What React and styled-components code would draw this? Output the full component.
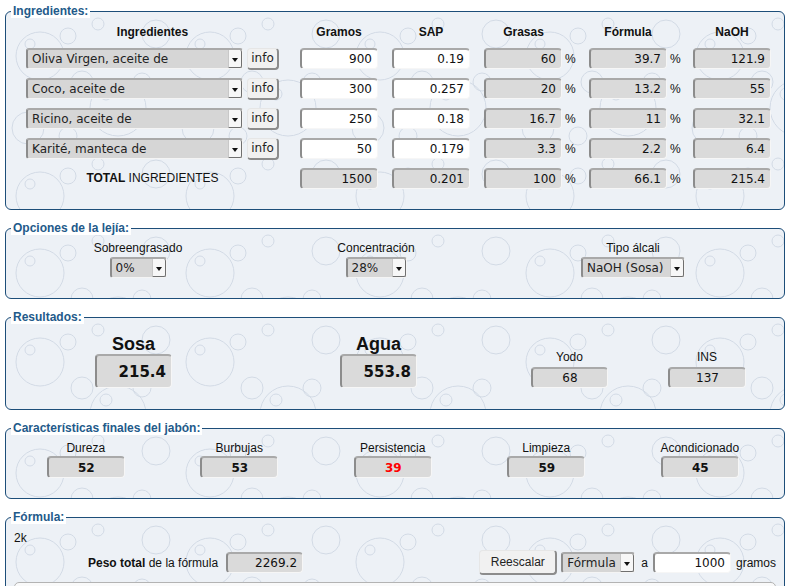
import React from 'react';
import styled, { createGlobalStyle } from 'styled-components';

const bubbleSvg = `<svg xmlns='http://www.w3.org/2000/svg' width='170' height='140'><g fill='none' stroke='#d2dae5' stroke-width='1'><circle cx='34' cy='44' r='24'/><circle cx='24' cy='32' r='5'/><circle cx='62' cy='24' r='8'/><circle cx='112' cy='96' r='28'/><circle cx='100' cy='82' r='6'/><circle cx='136' cy='70' r='9'/><circle cx='150' cy='22' r='14'/><circle cx='22' cy='116' r='16'/><circle cx='62' cy='124' r='9'/><circle cx='92' cy='12' r='6'/><circle cx='76' cy='70' r='11'/></g></svg>`;
const bubbles = `url("data:image/svg+xml,${encodeURIComponent(bubbleSvg)}")`;

const GlobalStyle = createGlobalStyle`
  body {
    margin: 0;
    background: #fff;
    color: #111;
    font-family: "Liberation Sans", Arial, sans-serif;
    font-size: 12px;
  }
`;

const Page = styled.div`
  padding: 4px 6px 0 5px;
`;

const Box = styled.fieldset`
  margin: 0 0 11px;
  padding: 0;
  min-width: 0;
  border: 1px solid #1d4e79;
  border-radius: 6px;
  background: #edf1f6 ${bubbles};
`;

const Legend = styled.legend`
  margin-left: 5px;
  padding: 0 2px;
  background: #fff;
  color: #235a8a;
  font: bold 12px/14px "Liberation Sans", Arial, sans-serif;
`;

const Field = styled.input`
  box-sizing: border-box;
  width: ${(p) => p.$w || 78}px;
  height: ${(p) => p.$h || 21}px;
  margin: 0;
  padding: 0 ${(p) => (p.$center ? 0 : 5)}px 0 0;
  border-style: solid;
  border-width: 2px 1px 1px 2px;
  border-color: #a9a9a9 #f6f6f6 #f6f6f6 #8c8c8c;
  border-radius: 4px;
  background: ${(p) => (p.readOnly ? '#dadada' : '#fff')};
  color: ${(p) => p.$color || '#111'};
  text-align: ${(p) => (p.$center ? 'center' : 'right')};
  font-family: "DejaVu Sans", sans-serif;
  font-size: ${(p) => p.$size || 12}px;
  font-weight: ${(p) => (p.$bold ? 'bold' : 'normal')};
  outline: none;
`;

const SelectBox = styled.div`
  box-sizing: border-box;
  display: flex;
  width: ${(p) => p.$w}px;
  height: 21px;
  border-style: solid;
  border-width: 2px 1px 1px 2px;
  border-color: #a9a9a9 #f4f4f4 #f4f4f4 #8c8c8c;
  border-radius: 3px;
  background: #d6d6d6;
  font: 12px/18px "DejaVu Sans", sans-serif;
  color: #222;
`;

const SelectText = styled.span`
  flex: 1;
  padding-left: 4px;
  white-space: nowrap;
  overflow: hidden;
`;

const Arrow = styled.span`
  box-sizing: border-box;
  width: 14px;
  display: flex;
  align-items: center;
  justify-content: center;
  background: #f7f7f7;
  border-left: 1px solid #c8c8c8;
  border-right: 1px solid #6f6f6f;
  border-bottom: 1px solid #6f6f6f;
  border-radius: 0 2px 2px 0;

  &::after {
    content: '';
    border-left: 3px solid transparent;
    border-right: 3px solid transparent;
    border-top: 4px solid #111;
    margin-top: 2px;
  }
`;

const Button = styled.button`
  box-sizing: border-box;
  width: ${(p) => p.$w}px;
  height: ${(p) => p.$h}px;
  margin: 0;
  padding: 0;
  border-style: solid;
  border-width: 1px 2px 2px 1px;
  border-color: #e6e6e6 #8c8c8c #8c8c8c #e6e6e6;
  border-radius: 4px;
  background: #f1f1f1;
  color: #222;
  font-family: ${(p) => (p.$dejavu ? '"DejaVu Sans", sans-serif' : '"Liberation Sans", Arial, sans-serif')};
  font-size: 12px;
`;

function Select({ w, children }) {
  return (
    <SelectBox $w={w}>
      <SelectText>{children}</SelectText>
      <Arrow />
    </SelectBox>
  );
}

/* ---------- Ingredientes ---------- */

const IngGrid = styled.div`
  display: grid;
  grid-template-columns: 260px 78px 78px 91px 90px 78px;
  grid-template-rows: 13px;
  grid-auto-rows: 21px;
  column-gap: 14px;
  row-gap: 9px;
  align-items: center;
  padding: 8px 0 20px 20px;
`;

const Head = styled.div`
  font-weight: bold;
  line-height: 13px;
  text-align: center;
  padding-right: ${(p) => p.$pr || 0}px;
`;

const IngCell = styled.div`
  display: flex;
  align-items: center;
  gap: 4px;
`;

const PctCell = styled.div`
  display: flex;
  align-items: center;
  gap: 3px;
`;

const TotalLabel = styled.div`
  text-align: center;
  padding-right: 7px;
  line-height: 21px;
`;

const ingredientes = [
  { name: 'Oliva Virgen, aceite de', g: '900', sap: '0.19', grasas: '60', form: '39.7', naoh: '121.9' },
  { name: 'Coco, aceite de', g: '300', sap: '0.257', grasas: '20', form: '13.2', naoh: '55' },
  { name: 'Ricino, aceite de', g: '250', sap: '0.18', grasas: '16.7', form: '11', naoh: '32.1' },
  { name: 'Karité, manteca de', g: '50', sap: '0.179', grasas: '3.3', form: '2.2', naoh: '6.4' },
];

function Pct({ value }) {
  return (
    <PctCell>
      <Field readOnly value={value} />
      <span>%</span>
    </PctCell>
  );
}

/* ---------- Opciones / Resultados / Características ---------- */

const LejiaGrid = styled.div`
  display: grid;
  grid-template-columns: 264px 212px 1fr;
  padding: 6px 0 20px;
`;

const Col = styled.div`
  display: flex;
  flex-direction: column;
  align-items: center;
  gap: ${(p) => p.$gap || 0}px;
`;

const Label = styled.div`
  line-height: 15px;
`;

const BigLabel = styled.div`
  font-weight: bold;
  font-size: 18px;
  line-height: 20px;
`;

const ResGrid = styled.div`
  display: grid;
  grid-template-columns: 255px 235px 147px 128px;
  align-items: end;
  padding: 10px 0 21px;
`;

const CharGrid = styled.div`
  display: grid;
  grid-template-columns: repeat(5, 153.5px);
  padding: 6px 0 20px 3px;
`;

/* ---------- Fórmula ---------- */

const FormBody = styled.div`
  padding: 7px 8px 0;
`;

const Line = styled.div`
  line-height: 15px;
`;

const FormRow = styled.div`
  display: flex;
  align-items: center;
  margin-top: 4px;
  height: 25px;
`;

const Group = styled.div`
  display: flex;
  align-items: center;
  gap: ${(p) => p.$gap}px;
  margin-left: ${(p) => p.$ml};
`;

const Notes = styled.div`
  margin-top: 7px;
  height: 40px;
  border: 1px solid #b3b3b3;
  border-radius: 5px;
  background: #fafafa;
`;

export default function App() {
  return (
    <Page>
      <GlobalStyle />

      <Box>
        <Legend>Ingredientes:</Legend>
        <IngGrid>
          <Head $pr={7}>Ingredientes</Head>
          <Head>Gramos</Head>
          <Head>SAP</Head>
          <Head $pr={12}>Grasas</Head>
          <Head $pr={12}>Fórmula</Head>
          <Head>NaOH</Head>

          {ingredientes.map((r) => (
            <React.Fragment key={r.name}>
              <IngCell>
                <Select w={217}>{r.name}</Select>
                <Button $w={32} $h={22} $dejavu>info</Button>
              </IngCell>
              <Field value={r.g} readOnly={false} onChange={() => {}} />
              <Field value={r.sap} readOnly={false} onChange={() => {}} />
              <Pct value={r.grasas} />
              <Pct value={r.form} />
              <Field readOnly value={r.naoh} />
            </React.Fragment>
          ))}

          <TotalLabel>
            <b>TOTAL</b> INGREDIENTES
          </TotalLabel>
          <Field readOnly value="1500" />
          <Field readOnly value="0.201" />
          <Pct value="100" />
          <Pct value="66.1" />
          <Field readOnly value="215.4" />
        </IngGrid>
      </Box>

      <Box>
        <Legend>Opciones de la lejía:</Legend>
        <LejiaGrid>
          <Col $gap={1}>
            <Label>Sobreengrasado</Label>
            <Select w={57}>0%</Select>
          </Col>
          <Col $gap={1}>
            <Label>Concentración</Label>
            <Select w={61}>28%</Select>
          </Col>
          <Col $gap={1}>
            <Label>Tipo álcali</Label>
            <Select w={104}>NaOH (Sosa)</Select>
          </Col>
        </LejiaGrid>
      </Box>

      <Box>
        <Legend>Resultados:</Legend>
        <ResGrid>
          <Col>
            <BigLabel>Sosa</BigLabel>
            <Field readOnly value="215.4" $w={77} $h={34} $size={15} $bold />
          </Col>
          <Col>
            <BigLabel>Agua</BigLabel>
            <Field readOnly value="553.8" $w={77} $h={34} $size={15} $bold />
          </Col>
          <Col $gap={2}>
            <Label>Yodo</Label>
            <Field readOnly value="68" $w={77} $center />
          </Col>
          <Col $gap={2}>
            <Label>INS</Label>
            <Field readOnly value="137" $w={78} $center />
          </Col>
        </ResGrid>
      </Box>

      <Box>
        <Legend>Características finales del jabón:</Legend>
        <CharGrid>
          {[
            ['Dureza', '52'],
            ['Burbujas', '53'],
            ['Persistencia', '39', '#f00'],
            ['Limpieza', '59'],
            ['Acondicionado', '45'],
          ].map(([k, v, c]) => (
            <Col key={k}>
              <Label>{k}</Label>
              <Field readOnly value={v} $w={78} $h={22} $center $bold $color={c} />
            </Col>
          ))}
        </CharGrid>
      </Box>

      <Box>
        <Legend>Fórmula:</Legend>
        <FormBody>
          <Line>2k</Line>
          <FormRow>
            <Group $gap={8} $ml="74px">
              <span>
                <b>Peso total</b> de la fórmula
              </span>
              <Field readOnly value="2269.2" $w={77} />
            </Group>
            <Group $gap={4} $ml="auto">
              <Button $w={78} $h={25}>Reescalar</Button>
              <Select w={74}>Fórmula</Select>
              <span style={{ margin: '0 1px 0 2px' }}>a</span>
              <Field value="1000" readOnly={false} onChange={() => {}} $w={78} />
              <span style={{ marginLeft: 1 }}>gramos</span>
            </Group>
          </FormRow>
          <Notes />
        </FormBody>
      </Box>
    </Page>
  );
}
